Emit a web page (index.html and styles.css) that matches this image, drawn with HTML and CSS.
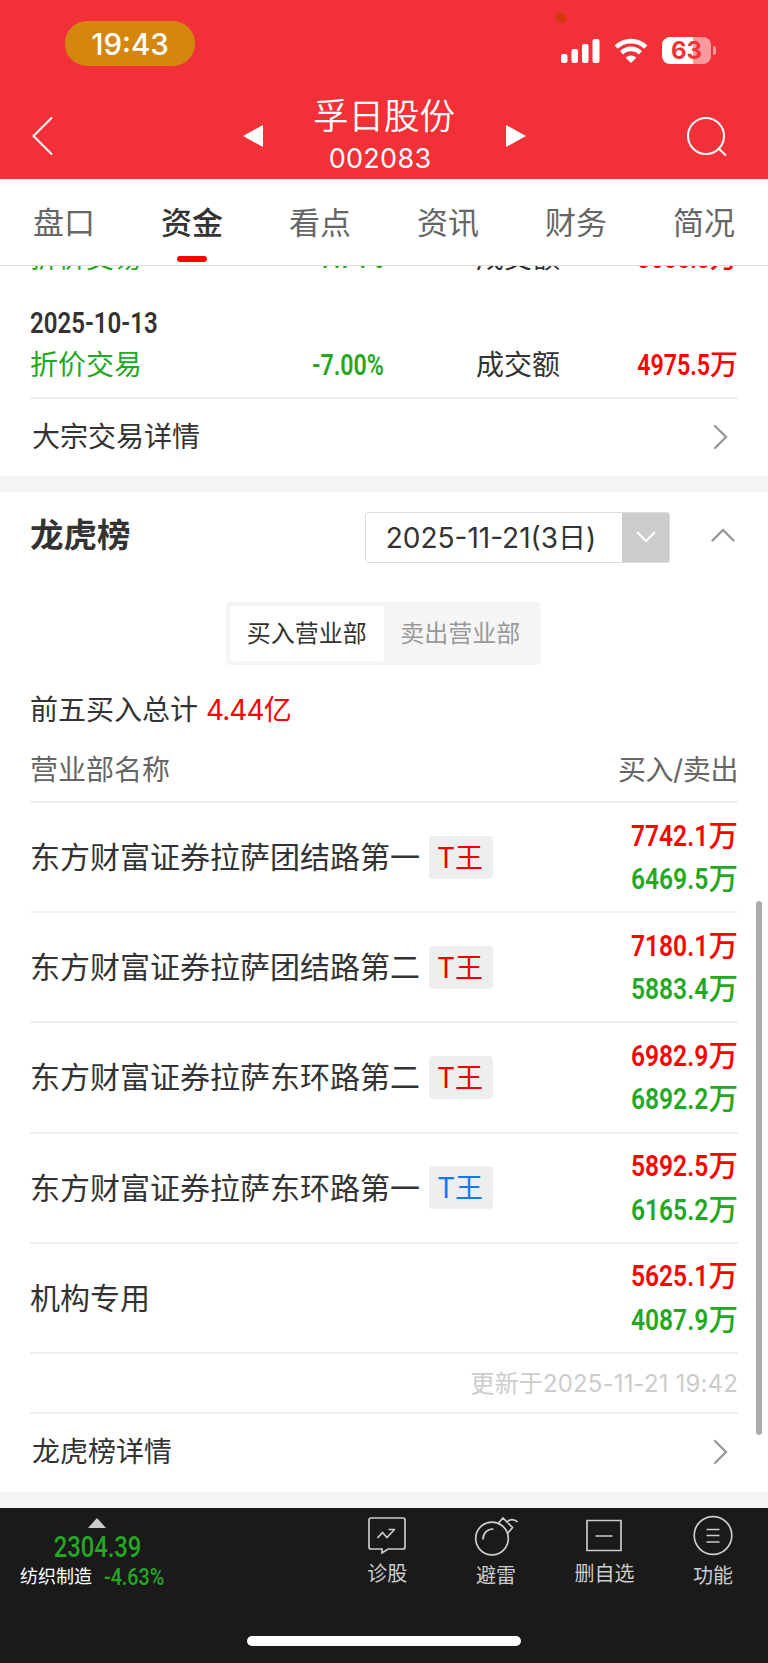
FILE: index.html
```html
<!DOCTYPE html>
<html lang="zh-CN">
<head>
    <meta charset="UTF-8">
    <meta name="viewport" content="width=device-width, initial-scale=1.0">
    <title>孚日股份 - 资金</title>
    <link rel="stylesheet" href="styles.css">
</head>
<body>
    <header>
        <div class="status-bar">
            <span class="clock">19:43</span>
            <i class="mic-dot"></i>
            <svg class="signal" width="40" height="26" viewBox="0 0 40 26" fill="#fff">
                <rect x="0" y="16" width="6.5" height="9" rx="2"/>
                <rect x="10.5" y="11" width="6.5" height="14" rx="2"/>
                <rect x="21" y="6" width="6.5" height="19" rx="2"/>
                <rect x="31.5" y="1" width="7" height="24" rx="2"/>
            </svg>
            <svg class="wifi" width="34" height="26" viewBox="0 0 34 26">
                <g fill="none" stroke="#fff" stroke-width="4.6">
                    <path d="M2.2 9.2a21 21 0 0 1 29.6 0"/>
                    <path d="M7.6 14.8a13.3 13.3 0 0 1 18.8 0"/>
                </g>
                <path d="M17 25l-5.3-5.3a7.6 7.6 0 0 1 10.6 0z" fill="#fff"/>
            </svg>
            <div class="battery">63</div>
        </div>
        <div class="title-bar">
            <svg class="back" width="22" height="40" viewBox="0 0 22 40"><path d="M20 1.500L1.500 20l18.500 18.500" fill="none" stroke="#fff" stroke-width="2"/></svg>
            <svg class="prev" width="20" height="24" viewBox="0 0 20 24"><path d="M20 1v22L0 12z" fill="#fff"/></svg>
            <div class="stock">
                <h1>孚日股份</h1>
                <p>002083</p>
            </div>
            <svg class="next" width="20" height="24" viewBox="0 0 20 24"><path d="M0 1v22l20-11z" fill="#fff"/></svg>
            <svg class="search" width="42" height="42" viewBox="0 0 42 42" fill="none" stroke="#fff" stroke-width="2"><circle cx="20" cy="21" r="18"/><path d="M32 33l8 7.500"/></svg>
        </div>
    </header>

    <nav>
        <a>盘口</a>
        <a class="active">资金</a>
        <a>看点</a>
        <a>资讯</a>
        <a>财务</a>
        <a>简况</a>
    </nav>

    <main>
        <section class="block-trade">
            <div class="trade clipped">
                <span class="green">折价交易</span>
                <span class="rate green"><b class="din">-7.74%</b></span>
                <span>成交额</span>
                <span class="amount red"><b class="din">3685.8</b>万</span>
            </div>
            <div class="trade-date"><b class="din">2025-10-13</b></div>
            <div class="trade">
                <span class="green">折价交易</span>
                <span class="rate green"><b class="din">-7.00%</b></span>
                <span>成交额</span>
                <span class="amount red"><b class="din">4975.5</b>万</span>
            </div>
            <a class="more">大宗交易详情
                <svg width="16" height="26" viewBox="0 0 16 26"><path d="M2 2l11 11L2 24" fill="none" stroke="#999" stroke-width="2.400" stroke-linecap="round"/></svg>
            </a>
        </section>

        <section class="billboard">
            <div class="section-head">
                <h2>龙虎榜</h2>
                <div class="date-select">
                    <span>2025-11-21(3日)</span>
                    <i><svg width="20" height="12" viewBox="0 0 20 12"><path d="M1 1l9 9 9-9" fill="none" stroke="#fff" stroke-width="2"/></svg></i>
                </div>
                <svg class="fold" width="24" height="14" viewBox="0 0 24 14"><path d="M1.500 12.500L12 2l10.500 10.500" fill="none" stroke="#999" stroke-width="2.400" stroke-linecap="round"/></svg>
            </div>
            <div class="segment">
                <span class="on">买入营业部</span>
                <span>卖出营业部</span>
            </div>
            <div class="total">前五买入总计 <em>4.44亿</em></div>
            <div class="list-head"><span>营业部名称</span><span class="sides">买入/卖出</span></div>
            <ul>
                <li>
                    <span class="name">东方财富证券拉萨团结路第一</span><span class="tag">T王</span>
                    <div class="values"><p class="red"><b class="din">7742.1</b>万</p><p class="green"><b class="din">6469.5</b>万</p></div>
                </li>
                <li>
                    <span class="name">东方财富证券拉萨团结路第二</span><span class="tag">T王</span>
                    <div class="values"><p class="red"><b class="din">7180.1</b>万</p><p class="green"><b class="din">5883.4</b>万</p></div>
                </li>
                <li>
                    <span class="name">东方财富证券拉萨东环路第二</span><span class="tag">T王</span>
                    <div class="values"><p class="red"><b class="din">6982.9</b>万</p><p class="green"><b class="din">6892.2</b>万</p></div>
                </li>
                <li>
                    <span class="name">东方财富证券拉萨东环路第一</span><span class="tag blue">T王</span>
                    <div class="values"><p class="red"><b class="din">5892.5</b>万</p><p class="green"><b class="din">6165.2</b>万</p></div>
                </li>
                <li>
                    <span class="name">机构专用</span>
                    <div class="values"><p class="red"><b class="din">5625.1</b>万</p><p class="green"><b class="din">4087.9</b>万</p></div>
                </li>
            </ul>
            <div class="updated">更新于2025-11-21 19:42</div>
            <a class="more">龙虎榜详情
                <svg width="16" height="26" viewBox="0 0 16 26"><path d="M2 2l11 11L2 24" fill="none" stroke="#999" stroke-width="2.400" stroke-linecap="round"/></svg>
            </a>
        </section>
        <i class="scrollbar"></i>
    </main>

    <footer>
        <div class="toolbar">
            <div class="sector">
                <svg width="18" height="10" viewBox="0 0 18 10"><path d="M9 0l9 10H0z" fill="#ccc"/></svg>
                <b class="din point">2304.39</b>
                <div class="sector-row"><span>纺织制造</span><b class="din percent">-4.63%</b></div>
            </div>
            <div class="tool">
                <svg width="44" height="42" viewBox="0 0 44 42">
                    <path d="M6 4h32a2 2 0 0 1 2 2v27a2 2 0 0 1-2 2H23l-6 4V35H6a2 2 0 0 1-2-2V6a2 2 0 0 1 2-2z"/>
                    <path d="M12.500 24l5-5.500 4.500 5L29.500 15.500M23.500 15.500h6.500"/>
                </svg>
                <span>诊股</span>
            </div>
            <div class="tool low">
                <svg width="44" height="42" viewBox="0 0 44 42">
                    <circle cx="18" cy="24.500" r="16.300"/>
                    <path d="M9 25.500a10 10 0 0 1 10.500-10.500M24 9.500l5-5.500 9.500 9.500-5 6M33 8.500c2-3.500 7-4 10.500-.5"/>
                </svg>
                <span>避雷</span>
            </div>
            <div class="tool">
                <svg width="44" height="42" viewBox="0 0 44 42"><path d="M5 6.500h34v30H5zM13.500 22h17"/></svg>
                <span>删自选</span>
            </div>
            <div class="tool low">
                <svg width="44" height="42" viewBox="0 0 44 42"><circle cx="22" cy="21.500" r="18.800"/><path d="M15.500 15.500h13M15.500 21.500h13M15.500 28h13"/></svg>
                <span>功能</span>
            </div>
        </div>
        <i class="home-bar"></i>
    </footer>
</body>
</html>
```
FILE: styles.css
```css
* {
    box-sizing: border-box;
    margin: 0;
    padding: 0;
}

body {
    width: 768px;
    height: 1663px;
    overflow: hidden;
    display: flex;
    flex-direction: column;
    background: #fff;
    color: #333;
    font-family: Inter, "Noto Sans CJK SC", sans-serif;
    font-size: 28px;
    line-height: 1;
}

i, em {
    font-style: normal;
}

svg {
    display: block;
    flex: none;
}

.red {
    color: #f00;
}

.green {
    color: #24a824;
}

/* narrow figures used for prices */
.din {
    display: inline-block;
    font-family: Roboto, sans-serif;
    font-size: 29px;
    font-weight: 600;
    transform: scaleX(0.8);
    transform-origin: right center;
    white-space: nowrap;
}

header {
    height: 179px;
    flex: none;
    background: #f23037;
    color: #fff;
}

.status-bar {
    height: 90px;
    display: flex;
    padding-left: 65px;
    position: relative;
}

.clock {
    width: 130px;
    height: 45px;
    margin-top: 21px;
    border-radius: 22px;
    background: #d4860f;
    font-size: 29.5px;
    font-weight: 500;
    line-height: 46px;
    text-align: center;
}

.mic-dot {
    position: absolute;
    left: 556px;
    top: 13px;
    width: 10px;
    height: 10px;
    border-radius: 50%;
    background: #d4380c;
}

.signal {
    margin: 38px 0 0 366px;
}

.wifi {
    margin: 38px 0 0 13px;
}

.battery {
    width: 49px;
    height: 27px;
    margin: 37px 0 0 14px;
    border-radius: 8px;
    background: linear-gradient(90deg, #fff 63%, #fa9a9d 63%);
    color: #f23037;
    font-size: 24px;
    font-weight: 700;
    line-height: 28px;
    text-align: center;
    position: relative;
}

.battery::after {
    content: "";
    position: absolute;
    right: -5px;
    top: 9px;
    width: 3px;
    height: 9px;
    border-radius: 0 4px 4px 0;
    background: #fa9a9d;
}

.title-bar {
    height: 89px;
    display: flex;
    align-items: center;
    padding: 3px 40px 0 32px;
}

.prev {
    margin-left: 189px;
}

.stock {
    width: 243px;
    padding-top: 2px;
    text-align: center;
}

.stock h1 {
    padding-right: 1px;
    font-size: 35.5px;
    font-weight: 350;
    line-height: 44px;
}

.stock p {
    padding-right: 9px;
    font-size: 27px;
    line-height: 40px;
    letter-spacing: 0.3px;
}

.search {
    margin-left: auto;
}

nav {
    height: 87px;
    flex: none;
    display: flex;
    border-bottom: 1px solid #ddd;
}

nav a {
    flex: 1;
    color: #666;
    font-size: 31px;
    line-height: 87px;
    text-align: center;
    position: relative;
}

nav .active {
    color: #333;
    font-weight: 500;
}

nav .active::after {
    content: "";
    position: absolute;
    left: 49px;
    bottom: 3px;
    width: 30px;
    height: 6px;
    border-radius: 3px;
    background: #f00;
}

main {
    height: 1242px;
    flex: none;
    overflow: hidden;
    background: #f5f5f5;
    position: relative;
}

section {
    padding: 0 30px;
    background: #fff;
}

.block-trade {
    height: 210px;
    margin-bottom: 16px;
}

.trade {
    height: 53px;
    display: grid;
    grid-template-columns: 220px 134px 204px 1fr;
    align-items: start;
    line-height: 42px;
}

/* row half scrolled under the tabs */
.clipped {
    height: 37px;
}

.clipped > span {
    margin-top: -29px;
}

.rate,
.amount {
    text-align: right;
}

.trade > span:nth-child(3) {
    padding-left: 92px;
}

.amount,
.values p {
    font-weight: 500;
}

.trade-date {
    height: 41px;
    line-height: 41px;
}

.trade-date .din {
    transform: scaleX(0.83);
    transform-origin: left center;
}

.more {
    height: 79px;
    display: flex;
    align-items: center;
    justify-content: space-between;
    padding: 0 9px 2px 2px;
    border-top: 2px solid #f0f0f0;
}

.billboard .more {
    height: 80px;
}

.section-head {
    height: 90px;
    display: flex;
    align-items: center;
}

h2 {
    padding-bottom: 2px;
    font-size: 33.5px;
    font-weight: 600;
}

.date-select {
    width: 305px;
    height: 51px;
    margin: 0 41px 0 auto;
    display: flex;
    border: 1px solid #ddd;
    border-radius: 3px;
}

.date-select span {
    flex: 1;
    padding-right: 6px;
    line-height: 50px;
    text-align: center;
}

.date-select i {
    width: 47px;
    display: flex;
    align-items: center;
    justify-content: center;
    background: #ccc;
}

.fold {
    margin: 0 3px 4px 0;
}

.segment {
    width: 315px;
    height: 63px;
    margin: 20px auto 21px 196px;
    padding: 4px;
    display: flex;
    border-radius: 4px;
    background: #f5f5f5;
    color: #999;
    font-size: 24px;
    line-height: 56px;
    text-align: center;
}

.segment span {
    flex: 1;
}

.segment .on {
    border-radius: 4px;
    background: #fff;
    color: #333;
}

.total {
    height: 46px;
    line-height: 48px;
}

.total em {
    color: #f00;
    letter-spacing: -0.9px;
}

.list-head {
    height: 69px;
    display: flex;
    justify-content: space-between;
    color: #666;
    line-height: 77px;
}

.sides {
    letter-spacing: -0.4px;
}

ul {
    list-style: none;
}

li {
    height: 110.2px;
    display: flex;
    align-items: center;
    border-top: 2px solid #f0f0f0;
}

.name {
    font-size: 30px;
}

.tag {
    width: 64px;
    height: 43px;
    margin-left: 9px;
    padding-right: 2px;
    border-radius: 4px;
    background: #eee;
    color: #e00;
    font-size: 28px;
    line-height: 44px;
    text-align: center;
}

.tag.blue {
    color: #1678f0;
}

.values {
    margin-left: auto;
    font-size: 29.5px;
    line-height: 43.5px;
    text-align: right;
}

.values .din {
    font-size: 30px;
    transform: scaleX(0.82);
}

.updated {
    height: 60px;
    border-top: 2px solid #f0f0f0;
    color: #ccc;
    font-size: 24px;
    letter-spacing: 0.15px;
    line-height: 59px;
    text-align: right;
}

.scrollbar {
    position: absolute;
    left: 756px;
    top: 635px;
    width: 6px;
    height: 534px;
    border-radius: 3px;
    background: #adadad;
}

footer {
    flex: 1;
    background: #1a1a1a;
    color: #ccc;
}

.toolbar {
    height: 128px;
    display: flex;
}

.sector {
    width: 194px;
    margin-right: 139px;
    padding-top: 10px;
    display: flex;
    flex-direction: column;
    align-items: center;
}

.sector .din {
    color: #24a824;
    font-weight: 500;
    transform-origin: center;
}

.sector .point {
    margin-top: 5px;
    transform: scaleX(0.82);
}

.sector-row {
    width: 100%;
    margin-top: 3px;
    display: flex;
    align-items: center;
    padding-left: 20px;
    color: #fff;
    font-size: 18px;
}

.sector .percent {
    margin-left: 12px;
    font-size: 24px;
    transform: scaleX(0.82);
    transform-origin: left center;
}

.tool {
    width: 108.6px;
    padding-top: 6px;
    display: flex;
    flex-direction: column;
    align-items: center;
    font-size: 20px;
}

.tool svg {
    fill: none;
    stroke: #ccc;
    stroke-width: 1.7;
}

.tool span {
    margin-top: 8px;
}

.tool.low span {
    margin-top: 10px;
}

.home-bar {
    display: block;
    width: 274px;
    height: 10px;
    margin: 0 auto;
    border-radius: 5px;
    background: #fff;
}
```
